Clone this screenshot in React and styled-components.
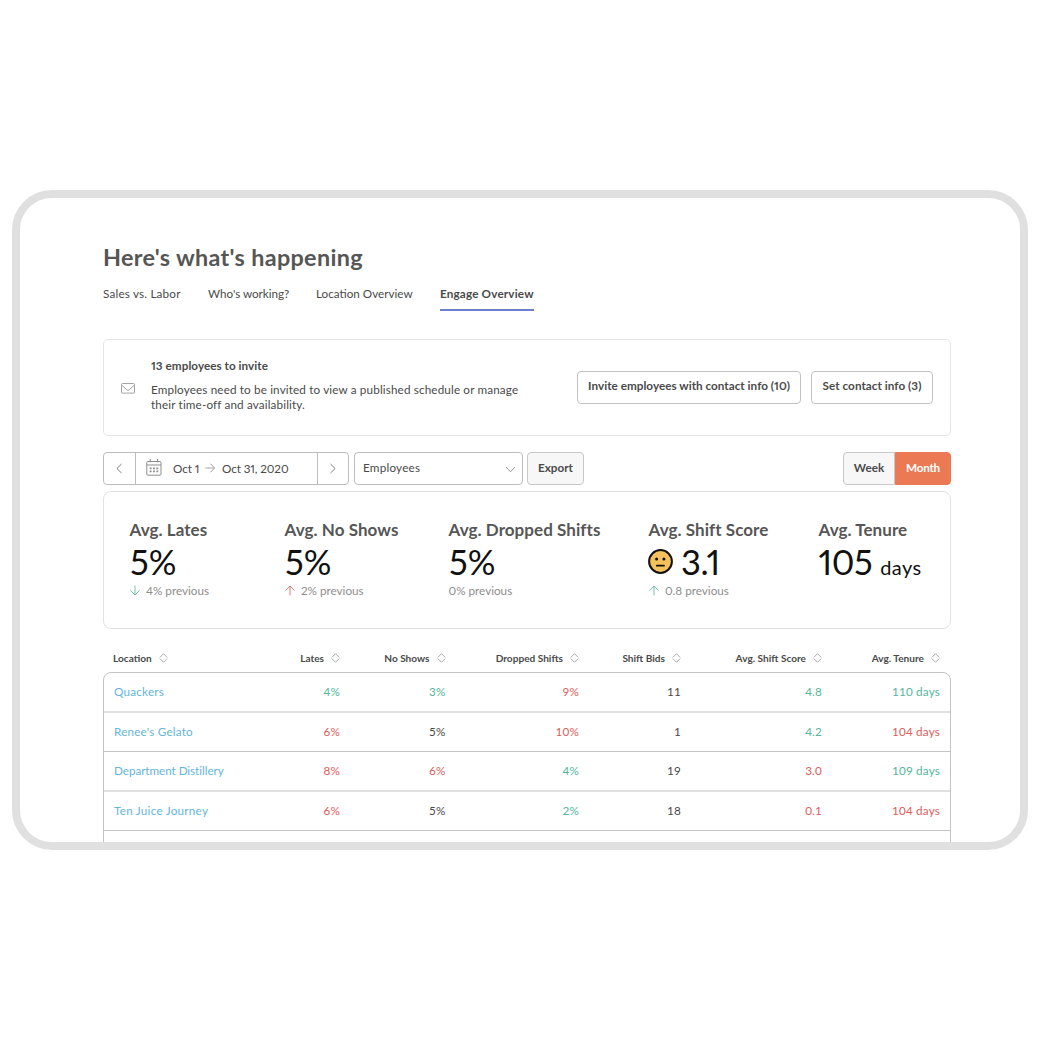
import styled, { createGlobalStyle } from 'styled-components'

const colors = {
  good: '#53b69d',
  bad: '#dd5d5a',
  text: '#4a4a4a',
  link: '#66b5da',
}

const tabs = [
  { label: 'Sales vs. Labor', width: 78, spacing: 0.19 },
  { label: "Who's working?", width: 81, spacing: -0.02 },
  { label: 'Location Overview', width: 97, spacing: 0 },
  { label: 'Engage Overview', width: 94, spacing: 0.17, active: true },
]

const stats = [
  { title: 'Avg. Lates', value: '5%', previous: '4% previous', arrow: 'down', tone: 'good' },
  { title: 'Avg. No Shows', value: '5%', previous: '2% previous', arrow: 'up', tone: 'bad' },
  { title: 'Avg. Dropped Shifts', value: '5%', previous: '0% previous' },
  { title: 'Avg. Shift Score', value: '3.1', previous: '0.8 previous', arrow: 'up', tone: 'good', face: true },
  { title: 'Avg. Tenure', value: '105', unit: 'days' },
]

const columns = [
  'Location',
  'Lates',
  'No Shows',
  'Dropped Shifts',
  'Shift Bids',
  'Avg. Shift Score',
  'Avg. Tenure',
]

const locations = [
  {
    name: 'Quackers',
    spacing: 0.22,
    cells: [['4%', 'good'], ['3%', 'good'], ['9%', 'bad'], ['11', 'text'], ['4.8', 'good'], ['110 days', 'good']],
  },
  {
    name: "Renee's Gelato",
    spacing: 0.2,
    cells: [['6%', 'bad'], ['5%', 'text'], ['10%', 'bad'], ['1', 'text'], ['4.2', 'good'], ['104 days', 'bad']],
  },
  {
    name: 'Department Distillery',
    spacing: -0.05,
    cells: [['8%', 'bad'], ['6%', 'bad'], ['4%', 'good'], ['19', 'text'], ['3.0', 'bad'], ['109 days', 'good']],
  },
  {
    name: 'Ten Juice Journey',
    spacing: 0.25,
    cells: [['6%', 'bad'], ['5%', 'text'], ['2%', 'good'], ['18', 'text'], ['0.1', 'bad'], ['104 days', 'bad']],
  },
]

const MailIcon = () => (
  <svg width='14' height='11' viewBox='0 0 14 11' fill='none' stroke='#a3a3a3'>
    <rect x='0.5' y='0.5' width='13' height='9.6' rx='1' />
    <path d='M0.8 2.2 L5.8 6.8 Q7 7.8 8.2 6.8 L13.2 2.2' />
  </svg>
)

const CalendarIcon = () => (
  <svg width='16' height='17' viewBox='0 0 16 17' fill='none' stroke='#8f8f8f'>
    <rect x='0.8' y='2.5' width='14.2' height='13.7' rx='1' />
    <path d='M1 6 H15 M4.2 0 V3.4 M11.6 0 V3.4' />
    <path d='M3.7 9.3 H12.3 M3.7 12.4 H12.3' strokeWidth='1.8' strokeDasharray='1.9 1.4' />
  </svg>
)

const Chevron = ({ right }) => (
  <svg width='7' height='11' viewBox='0 0 7 11' fill='none' stroke='#7d7d7d'>
    <path d={right ? 'M1.5 1 L6.1 5.5 L1.5 10' : 'M5.5 1 L0.9 5.5 L5.5 10'} />
  </svg>
)

const ChevronDown = () => (
  <svg width='11' height='7' viewBox='0 0 11 7' fill='none' stroke='#9a9a9a'>
    <path d='M1 1 L5.5 5.8 L10 1' />
  </svg>
)

const RangeArrow = () => (
  <svg width='11' height='10' viewBox='0 0 11 10' fill='none' stroke='#9b9b9b' strokeWidth='0.9'>
    <path d='M0.5 5 H9.6 M5.4 0.7 L9.6 5 L5.4 9.3' />
  </svg>
)

const TrendArrow = ({ direction, color }) => (
  <svg width='11' height='11' viewBox='0 0 11 11' fill='none' stroke={color} strokeWidth='0.8'>
    {direction === 'up' ? (
      <path d='M5 10.5 V1 M0.5 5.6 L5 1 L9.5 5.6' />
    ) : (
      <path d='M5 0.5 V10 M0.5 5.4 L5 10 L9.5 5.4' />
    )}
  </svg>
)

const SortIcon = () => (
  <svg width='9' height='10' viewBox='0 0 9 10' fill='none' stroke='#a0a0a0' strokeWidth='0.9'>
    <path d='M0.8 4.4 L4.5 0.7 L8.2 4.4 M0.8 5.6 L4.5 9.3 L8.2 5.6' />
  </svg>
)

const NeutralFace = () => (
  <svg width='25' height='25' viewBox='0 0 25 25'>
    <circle cx='12.5' cy='12.5' r='11.4' fill='#f3c25d' stroke='#111' strokeWidth='2' />
    <circle cx='8.6' cy='9.9' r='1.5' fill='#111' />
    <circle cx='15.9' cy='9.9' r='1.5' fill='#111' />
    <path d='M8.8 16.7 H16' stroke='#111' strokeWidth='1.8' strokeLinecap='round' />
  </svg>
)

const App = () => {
  return (
    <Frame>
      <GlobalStyle />
      <Title>Here's what's happening</Title>

      <Tabs>
        {tabs.map(tab => (
          <Tab key={tab.label} $active={tab.active} $width={tab.width} $spacing={tab.spacing}>
            {tab.label}
          </Tab>
        ))}
      </Tabs>

      <Invite>
        <MailIcon />
        <InviteText>
          <h2>13 employees to invite</h2>
          <p>
            Employees need to be invited to view a published schedule or manage
            <br />
            their time-off and availability.
          </p>
        </InviteText>
        <Button $width={224} $spacing={0.03}>
          Invite employees with contact info (10)
        </Button>
        <Button $width={122} $spacing={0.05}>
          Set contact info (3)
        </Button>
      </Invite>

      <Toolbar>
        <DateRange>
          <Step>
            <Chevron />
          </Step>
          <Dates>
            <CalendarIcon />
            <DateText $width={32}>Oct 1</DateText>
            <RangeArrow />
            <DateText $width={70}>Oct 31, 2020</DateText>
          </Dates>
          <Step>
            <Chevron right />
          </Step>
        </DateRange>
        <Select>
          Employees
          <ChevronDown />
        </Select>
        <ExportButton>Export</ExportButton>
        <Toggle>
          <ToggleItem $width={52}>Week</ToggleItem>
          <ToggleItem $width={56} $spacing={-0.2} $active>
            Month
          </ToggleItem>
        </Toggle>
      </Toolbar>

      <Stats>
        {stats.map(stat => (
          <div key={stat.title}>
            <StatTitle>{stat.title}</StatTitle>
            <StatValue $tight={stat.value.length > 2}>
              {stat.face && <NeutralFace />}
              <span>{stat.value}</span>
              {stat.unit && <small>{stat.unit}</small>}
            </StatValue>
            {stat.previous && (
              <Previous>
                {stat.arrow && <TrendArrow direction={stat.arrow} color={colors[stat.tone]} />}
                {stat.previous}
              </Previous>
            )}
          </div>
        ))}
      </Stats>

      <TableHead>
        {columns.map(column => (
          <HeadCell key={column}>
            {column}
            <SortIcon />
          </HeadCell>
        ))}
      </TableHead>
      <TableBody>
        {locations.map(location => (
          <Row key={location.name}>
            <Name $spacing={location.spacing}>{location.name}</Name>
            {location.cells.map(([value, tone], i) => (
              <Cell key={columns[i + 1]} $tone={tone}>
                {value}
              </Cell>
            ))}
          </Row>
        ))}
      </TableBody>
    </Frame>
  )
}

export default App

const GlobalStyle = createGlobalStyle`
  * {
    box-sizing: border-box;
  }

  body {
    margin: 0;
    background: #fff;
    color: #4a4a4a;
    font-family: Lato, 'Liberation Sans', sans-serif;
    font-size: 11.7px;
    font-variant-numeric: proportional-nums;
  }

  #root {
    display: flow-root;
  }

  h1, h2, p {
    margin: 0;
  }

  svg {
    display: block;
    flex-shrink: 0;
  }
`

const Frame = styled.main`
  width: 1016px;
  height: 660px;
  margin: 190px 12px 0;
  padding: 44px 69px 0 83px;
  border: 8px solid #e0e0e0;
  border-radius: 40px;
  background: #fff;
  overflow: hidden;
`

const Title = styled.h1`
  color: #565656;
  font-size: 23.4px;
  font-weight: 700;
  line-height: 30px;
  letter-spacing: 0.32px;
`

const Tabs = styled.nav`
  display: flex;
  gap: 27px;
  margin-top: 13px;
`

const Tab = styled.a`
  width: ${p => p.$width}px;
  padding-bottom: 8px;
  border-bottom: 2px solid ${p => (p.$active ? '#6c80cf' : 'transparent')};
  font-weight: ${p => (p.$active ? 700 : 400)};
  letter-spacing: ${p => p.$spacing}px;
  line-height: 16px;
  white-space: nowrap;
`

const Invite = styled.section`
  display: flex;
  align-items: center;
  gap: 10px;
  height: 97px;
  margin-top: 28px;
  padding: 0 17px;
  border: 1px solid #e5e5e5;
  border-radius: 5px;

  > svg {
    margin-top: 2px;
  }
`

const InviteText = styled.div`
  flex: 1;
  padding: 0 0 6px 6px;
  white-space: nowrap;

  h2 {
    margin-bottom: 9px;
    font-size: 11.7px;
    font-weight: 700;
    letter-spacing: 0.05px;
    line-height: 16px;
  }

  p {
    letter-spacing: 0.145px;
    line-height: 15px;
  }
`

const Button = styled.button`
  width: ${p => p.$width}px;
  height: 33px;
  padding: 0 0 5px;
  border: 1px solid #c2c2c2;
  border-radius: 4px;
  background: #fff;
  color: #4a4a4a;
  font: inherit;
  font-weight: 700;
  letter-spacing: ${p => p.$spacing || 0}px;
  white-space: nowrap;
`

const Toolbar = styled.div`
  display: flex;
  height: 33px;
  margin-top: 16px;
`

const DateRange = styled.div`
  display: flex;
  width: 246px;
  border: 1px solid #bdbdbd;
  border-radius: 4px;
`

const Step = styled.button`
  display: flex;
  align-items: center;
  justify-content: center;
  width: 30.5px;
  padding: 0 0 1px;
  border: 0;
  background: none;
`

const Dates = styled.div`
  flex: 1;
  display: flex;
  align-items: center;
  padding: 0 0 2px 10.5px;
  border: solid #bdbdbd;
  border-width: 0 1px;
  letter-spacing: -0.1px;
`

const DateText = styled.span`
  width: ${p => p.$width}px;
  margin-left: 6px;
  white-space: nowrap;

  &:nth-child(2) {
    margin-left: 11px;
  }
`

const Select = styled.div`
  display: flex;
  align-items: center;
  justify-content: space-between;
  width: 169px;
  margin-left: 5px;
  padding: 0 6px 3px 8px;
  border: 1px solid #bdbdbd;
  border-radius: 4px;
  letter-spacing: 0.22px;

  svg {
    margin-top: 5px;
  }
`

const ExportButton = styled.button`
  width: 57px;
  margin-left: 4px;
  padding: 0 0 3px;
  border: 1px solid #c8c8c8;
  border-radius: 4px;
  background: #f7f7f7;
  color: #4a4a4a;
  font: inherit;
  font-weight: 700;
`

const Toggle = styled.div`
  display: flex;
  margin-left: auto;
`

const ToggleItem = styled.button`
  width: ${p => p.$width}px;
  padding: 0 0 3px;
  border: 1px solid ${p => (p.$active ? '#eb7a54' : '#c8c8c8')};
  border-radius: ${p => (p.$active ? '0 4px 4px 0' : '4px 0 0 4px')};
  background: ${p => (p.$active ? '#eb7a54' : '#f7f7f7')};
  color: ${p => (p.$active ? '#fff' : '#4a4a4a')};
  font: inherit;
  font-weight: 700;
  letter-spacing: ${p => p.$spacing || 0}px;
`

const Stats = styled.section`
  display: grid;
  grid-template-columns: 155px 164px 200px 170px auto;
  height: 138px;
  margin-top: 6px;
  padding: 27px 0 0 25.5px;
  border: 1px solid #e2e2e2;
  border-radius: 8px;
`

const StatTitle = styled.h2`
  color: #565656;
  font-size: 17px;
  font-weight: 700;
  line-height: 22px;
  letter-spacing: 0.06px;
  white-space: nowrap;
`

const StatValue = styled.div`
  display: flex;
  align-items: baseline;
  gap: 8px;
  height: 41px;
  padding-left: ${p => (p.$tight ? 0 : 0.5)}px;
  color: #111;
  font-size: 34.6px;
  line-height: 42px;
  letter-spacing: ${p => (p.$tight ? -0.5 : 0)}px;
  white-space: nowrap;

  svg {
    align-self: center;
    margin-left: -0.5px;
  }

  small {
    font-size: 20px;
    letter-spacing: 0.4px;
  }
`

const Previous = styled.div`
  display: flex;
  align-items: center;
  gap: 5.5px;
  color: #8e8e8e;
  line-height: 16px;
`

const Grid = styled.div`
  display: grid;
  grid-template-columns: 110px 116px 105.5px 133.5px 102px 141px 118px;
`

const TableHead = styled(Grid)`
  margin-top: 21px;
  padding-left: 10px;
  height: 22px;
`

const HeadCell = styled.div`
  display: flex;
  align-items: center;
  justify-content: flex-end;
  gap: 7px;
  height: 16px;
  margin-right: -1px;
  font-size: 10.1px;
  font-weight: 700;
  white-space: nowrap;

  &:first-child {
    justify-content: flex-start;
  }
`

const TableBody = styled.div`
  height: 220px;
  border: 1px solid #c4c4c4;
  border-radius: 8px;
`

const Row = styled(Grid)`
  align-items: center;
  height: 39px;
  padding: 0 0 3px 10px;
  border-bottom: 1px solid #c4c4c4;

  &:nth-child(odd) {
    height: 40px;
    padding-bottom: 2px;
    border-bottom: 2px solid #e0e0e0;
  }
`

const Name = styled.a`
  color: ${colors.link};
  letter-spacing: ${p => p.$spacing}px;
  white-space: nowrap;
`

const Cell = styled.span`
  color: ${p => colors[p.$tone]};
  font-variant-numeric: tabular-nums;
  letter-spacing: 0.18px;
  text-align: right;
`
